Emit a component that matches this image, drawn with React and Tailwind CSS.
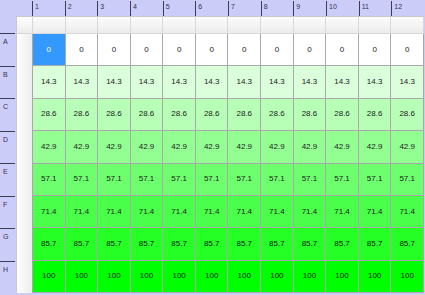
const COLS = Array.from({ length: 12 }, (_, i) => i + 1)
const ROWS = ['A', 'B', 'C', 'D', 'E', 'F', 'G', 'H']
const VALUES = ['0', '14.3', '28.6', '42.9', '57.1', '71.4', '85.7', '100']
const FILLS = [
  'bg-[#ffffff]',
  'bg-[#dbffdb]',
  'bg-[#b7ffb7]',
  'bg-[#93ff93]',
  'bg-[#6eff6e]',
  'bg-[#4aff4a]',
  'bg-[#25ff25]',
  'bg-[#00ff00]',
]

export default function App() {
  return (
    <div
      className="w-[425px] h-[295px] bg-[#ccccf8] grid grid-cols-[16px_409px] grid-rows-[16px_277px] overflow-hidden"
      style={{ fontFamily: '"Liberation Sans", Arial, sans-serif' }}
    >
      <div />
      {/* column ruler */}
      <div className="grid grid-cols-[16px_repeat(12,1fr)] w-[408px]">
        <div />
        {COLS.map(c => (
          <div key={c} className="relative">
            <div className="absolute left-0 top-[1px] h-[15px] w-px bg-[#3a3a5a]" />
            <span className="absolute left-[3px] top-[3px] text-[7px] leading-none text-[#333355]">{c}</span>
          </div>
        ))}
      </div>

      {/* row ruler */}
      <div className="grid grid-rows-[17px_repeat(8,1fr)] h-[277px]">
        <div />
        {ROWS.map(r => (
          <div key={r} className="relative">
            <div className="absolute left-0 top-0 w-[15px] h-px bg-[#3a3a5a]" />
            <span className="absolute left-[3px] top-[5px] text-[7px] leading-none text-[#333355]">{r}</span>
          </div>
        ))}
      </div>

      {/* plate */}
      <div className="w-[408px] h-[277px] grid grid-cols-[16px_repeat(12,1fr)] grid-rows-[17px_repeat(8,1fr)] border-l border-t border-[#c8c8c8] bg-white">
        <div className="bg-gradient-to-b from-[#ffffff] to-[#ececec] border-r border-b border-[#d8d8d8]" />
        {COLS.map(c => (
          <div key={c} className="bg-gradient-to-b from-[#fcfcfc] to-[#ececec] border-r border-b border-[#d8d8d8]" />
        ))}
        {ROWS.map((r, ri) => (
          <Row key={r} ri={ri} />
        ))}
      </div>
    </div>
  )
}

function Row({ ri }) {
  return (
    <>
      <div className="bg-gradient-to-r from-[#ffffff] to-[#ededed] border-r border-[#a8a8a8]" />
      {COLS.map(c => {
        const selected = ri === 0 && c === 1
        return (
          <div
            key={c}
            className={`flex items-center justify-center border-r border-b border-[#a9a9a9] text-[8px] ${
              selected ? 'bg-[#3399ff] text-white' : `${FILLS[ri]} text-[#222222]`
            }`}
          >
            {VALUES[ri]}
          </div>
        )
      })}
    </>
  )
}
